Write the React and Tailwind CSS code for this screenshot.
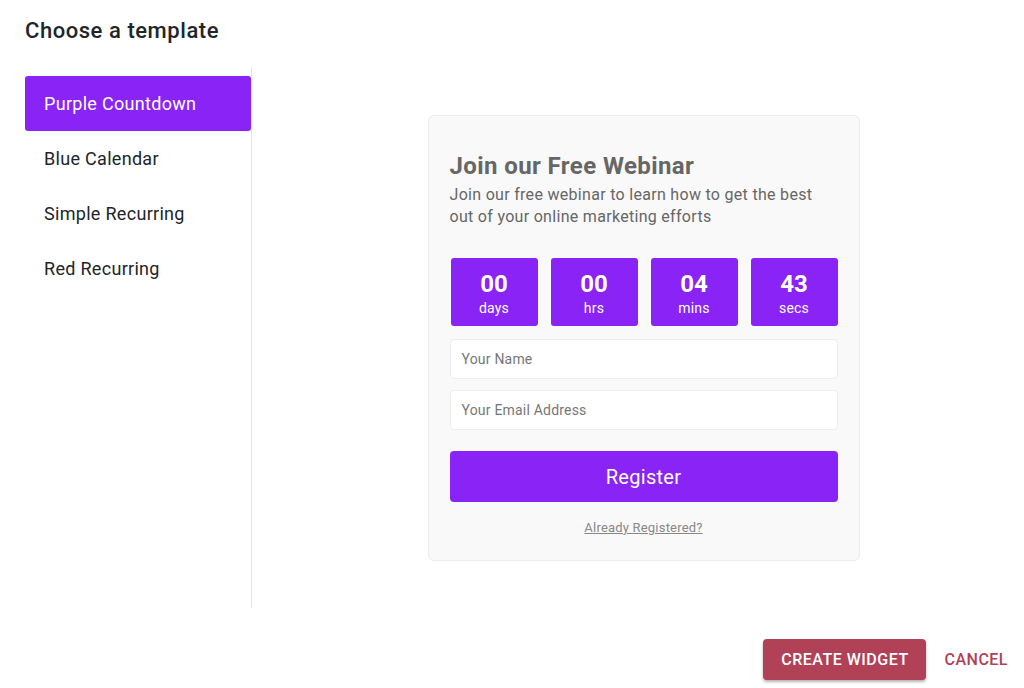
import React from "react";

const items = ["Purple Countdown", "Blue Calendar", "Simple Recurring", "Red Recurring"];
const counts = [
  ["00", "days"],
  ["00", "hrs"],
  ["04", "mins"],
  ["43", "secs"],
];

export default function App() {
  return (
    <div
      className="flex h-[688px] w-[1024px] flex-col bg-white text-[#212529]"
      style={{ fontFamily: "Roboto, 'Liberation Sans', sans-serif" }}
    >
      <div className="px-[25px] pt-[16px]">
        <h1 className="text-[22px] font-medium leading-[30px] tracking-[0.55px]">Choose a template</h1>
      </div>
      <div className="mt-[21px] flex h-[541px] px-[25px]">
        <div className="w-[227px] shrink-0 border-r border-[#e6e6e6] pt-[9px]">
          {items.map((t, i) => (
            <div
              key={t}
              className={
                "flex h-[55px] w-[226px] items-center rounded-[3px] pl-[19px] text-[18px] tracking-[0.3px] " +
                (i === 0 ? "bg-[#8a23f6] text-white" : "text-[#212529]")
              }
            >
              {t}
            </div>
          ))}
        </div>
        <div className="flex flex-1 items-center justify-center pl-[36px]">
          <div className="w-[432px] rounded-[6px] border border-[#ececec] bg-[#f9f9f9] px-[21px] pb-[24px] pt-[35px]">
            <h2 className="text-[24px] font-bold leading-[30px] tracking-[0.4px] text-[#666]">Join our Free Webinar</h2>
            <p className="mt-[3px] text-[16px] leading-[22px] tracking-[0.3px] text-[#666]">
              Join our free webinar to learn how to get the best out of your online marketing efforts
            </p>
            <div className="mt-[30px] grid grid-cols-4 gap-[13px] pl-[1px]">
              {counts.map(([n, l]) => (
                <div
                  key={l}
                  className="flex h-[68px] flex-col items-center justify-center rounded-[3px] bg-[#8a23f6] pt-[5px] text-white"
                >
                  <div className="text-[24px] font-bold leading-[28px]">{n}</div>
                  <div className="text-[14px] leading-[20px] tracking-[0.2px]">{l}</div>
                </div>
              ))}
            </div>
            <div className="mt-[13px] flex h-[40px] items-center rounded-[4px] border border-[#eeeeee] bg-white px-[11px] pt-[2px] text-[14px] tracking-[0.2px] text-[#777]">
              Your Name
            </div>
            <div className="mt-[11px] flex h-[40px] items-center rounded-[4px] border border-[#eeeeee] bg-white px-[11px] pt-[2px] text-[14px] tracking-[0.2px] text-[#777]">
              Your Email Address
            </div>
            <div className="mt-[21px] flex h-[51px] items-center justify-center rounded-[4px] bg-[#8a23f6] pt-[2px] text-[20px] tracking-[0.3px] text-white">
              Register
            </div>
            <div className="mt-[18px] text-center text-[13px] leading-[16px] tracking-[0.2px] text-[#888] underline">
              Already Registered?
            </div>
          </div>
        </div>
      </div>
      <div className="mt-[31px] flex items-center justify-end gap-[4px] pr-[2px]">
        <div className="flex h-[41px] w-[163px] items-center justify-center rounded-[4px] bg-[#b04157] text-[16px] font-medium tracking-[0.5px] text-white shadow-[0_2px_3px_rgba(0,0,0,0.3)]">
          CREATE WIDGET
        </div>
        <div className="flex h-[41px] items-center px-[14px] text-[16px] font-medium tracking-[0.5px] text-[#b04157]">
          CANCEL
        </div>
      </div>
    </div>
  );
}
